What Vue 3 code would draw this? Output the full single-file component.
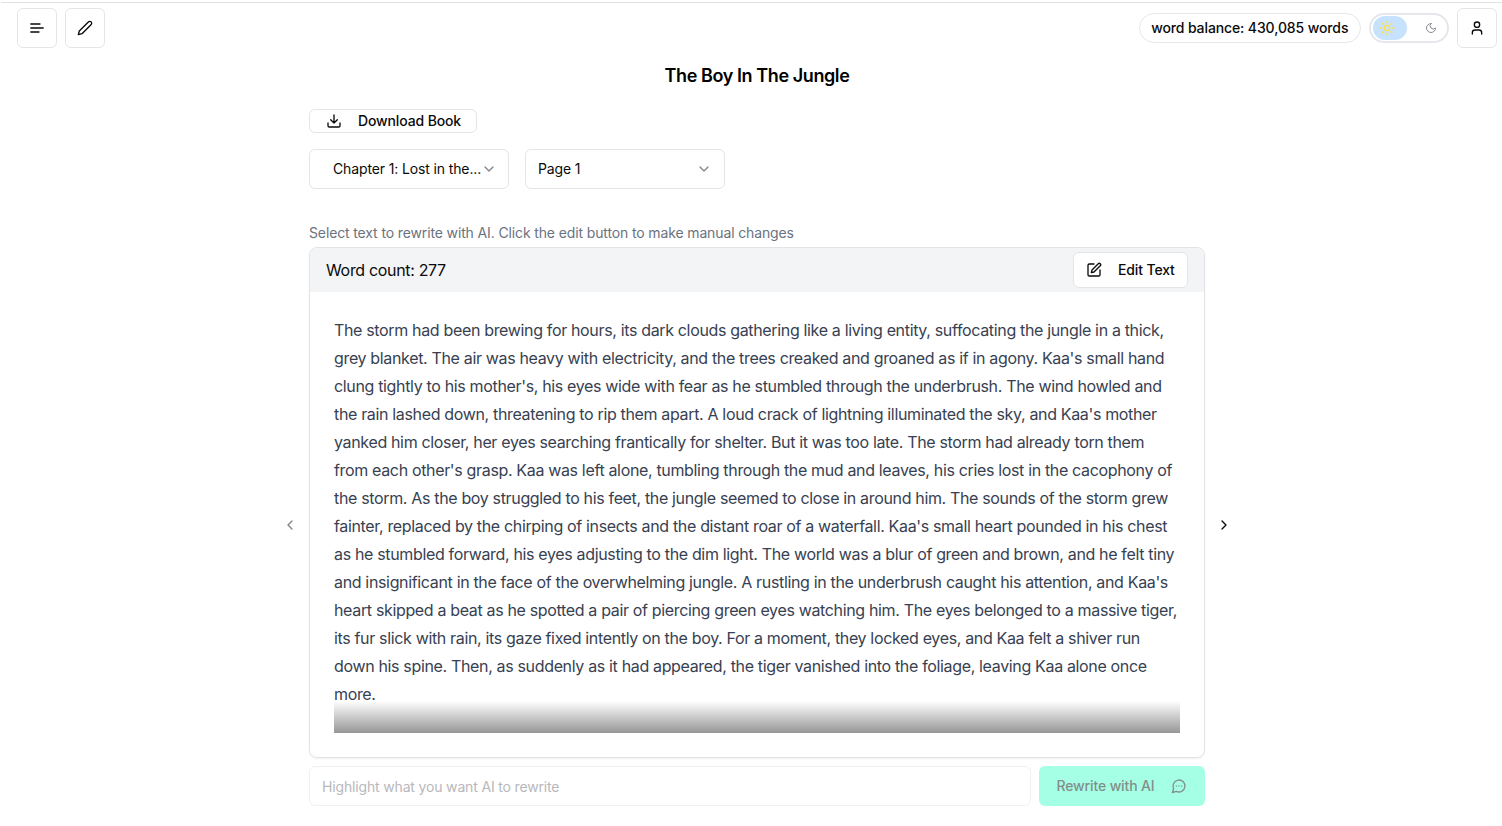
<template>
  <div class="page">
    <header class="topbar">
      <div class="topbar-group">
        <button class="icon-btn" type="button" aria-label="Menu">
          <svg width="16" height="16" viewBox="0 0 16 16" class="icon">
            <path d="M1.8 4H11M1.8 8h12.4M1.8 12H10" />
          </svg>
        </button>
        <button class="icon-btn" type="button" aria-label="New book">
          <svg width="16" height="16" viewBox="0 0 24 24" class="icon icon-24">
            <path d="M17 3a2.85 2.83 0 1 1 4 4L7.5 20.5 2 22l1.5-5.5Z" />
          </svg>
        </button>
      </div>
      <div class="topbar-group">
        <div class="balance">word balance: {{ balance.toLocaleString('en-US') }} words</div>
        <button class="theme-switch" type="button" aria-label="Theme" @click="dark = !dark">
          <span class="theme-side sun" :class="{ active: !dark }">
            <svg width="16" height="16" viewBox="0 0 24 24">
              <circle cx="12" cy="12" r="4" />
              <path
                d="M12 2v2M12 20v2M4.93 4.93l1.41 1.41M17.66 17.66l1.41 1.41M2 12h2M20 12h2M6.34 17.66l-1.41 1.41M19.07 4.93l-1.41 1.41"
              />
            </svg>
          </span>
          <span class="theme-side moon" :class="{ active: dark }">
            <svg width="12" height="12" viewBox="0 0 24 24">
              <path d="M12 3a6 6 0 0 0 9 9 9 9 0 1 1-9-9Z" />
            </svg>
          </span>
        </button>
        <button class="icon-btn user-btn" type="button" aria-label="Account">
          <svg width="16" height="16" viewBox="0 0 24 24" class="icon icon-24">
            <circle cx="12" cy="7" r="4" />
            <path d="M19 21v-2a4 4 0 0 0-4-4H9a4 4 0 0 0-4 4v2" />
          </svg>
        </button>
      </div>
    </header>

    <main class="book">
      <h1 class="book-title">The Boy In The Jungle</h1>

      <button class="download-btn" type="button">
        <svg width="16" height="16" viewBox="0 0 24 24" class="icon icon-24">
          <path d="M21 15v4a2 2 0 0 1-2 2H5a2 2 0 0 1-2-2v-4M7 10l5 5 5-5M12 15V3" />
        </svg>
        <span>Download Book</span>
      </button>

      <div class="selects">
        <button class="select chapter-select" type="button">
          <span>Chapter 1: Lost in the...</span>
          <svg width="16" height="16" viewBox="0 0 24 24" class="chevron"><path d="m6 9 6 6 6-6" /></svg>
        </button>
        <button class="select" type="button">
          <span>Page 1</span>
          <svg width="16" height="16" viewBox="0 0 24 24" class="chevron"><path d="m6 9 6 6 6-6" /></svg>
        </button>
      </div>

      <p class="hint">Select text to rewrite with AI. Click the edit button to make manual changes</p>

      <div class="reader">
        <button class="nav-btn" type="button" aria-label="Previous page" disabled>
          <svg width="16" height="16" viewBox="0 0 24 24" class="icon icon-24"><path d="m15 18-6-6 6-6" /></svg>
        </button>

        <section class="panel">
          <div class="panel-header">
            <span class="word-count">Word count: 277</span>
            <button class="edit-btn" type="button">
              <svg width="16" height="16" viewBox="0 0 24 24" class="icon icon-24">
                <path d="M12 3H5a2 2 0 0 0-2 2v14a2 2 0 0 0 2 2h14a2 2 0 0 0 2-2v-7" />
                <path d="M18.375 2.625a2.12 2.12 0 0 1 3 3L12 15l-4 1 1-4Z" />
              </svg>
              <span>Edit Text</span>
            </button>
          </div>
          <div class="panel-body">
            <div class="scroll-text">
              <p class="story">
                <span v-for="(line, i) in lines" :key="i" class="story-line">{{ line }}</span>
              </p>
              <div class="fade"></div>
            </div>
          </div>
        </section>

        <button class="nav-btn" type="button" aria-label="Next page">
          <svg width="16" height="16" viewBox="0 0 24 24" class="icon icon-24"><path d="m9 18 6-6-6-6" /></svg>
        </button>
      </div>

      <div class="rewrite">
        <input class="rewrite-input" type="text" placeholder="Highlight what you want AI to rewrite" disabled />
        <button class="rewrite-btn" type="button" disabled>
          <span>Rewrite with AI</span>
          <svg width="16" height="16" viewBox="0 0 24 24" class="icon icon-24">
            <path d="M7.9 20A9 9 0 1 0 4 16.1L2 22Z" />
            <path d="M8 12h.01M12 12h.01M16 12h.01" />
          </svg>
        </button>
      </div>
    </main>
  </div>
</template>

<script setup>
import { ref } from 'vue'

const balance = ref(430085)
const dark = ref(false)

const lines = [
  'The storm had been brewing for hours, its dark clouds gathering like a living entity, suffocating the jungle in a thick,',
  "grey blanket. The air was heavy with electricity, and the trees creaked and groaned as if in agony. Kaa's small hand",
  "clung tightly to his mother's, his eyes wide with fear as he stumbled through the underbrush. The wind howled and",
  "the rain lashed down, threatening to rip them apart. A loud crack of lightning illuminated the sky, and Kaa's mother",
  'yanked him closer, her eyes searching frantically for shelter. But it was too late. The storm had already torn them',
  "from each other's grasp. Kaa was left alone, tumbling through the mud and leaves, his cries lost in the cacophony of",
  'the storm. As the boy struggled to his feet, the jungle seemed to close in around him. The sounds of the storm grew',
  "fainter, replaced by the chirping of insects and the distant roar of a waterfall. Kaa's small heart pounded in his chest",
  'as he stumbled forward, his eyes adjusting to the dim light. The world was a blur of green and brown, and he felt tiny',
  "and insignificant in the face of the overwhelming jungle. A rustling in the underbrush caught his attention, and Kaa's",
  'heart skipped a beat as he spotted a pair of piercing green eyes watching him. The eyes belonged to a massive tiger,',
  'its fur slick with rain, its gaze fixed intently on the boy. For a moment, they locked eyes, and Kaa felt a shiver run',
  'down his spine. Then, as suddenly as it had appeared, the tiger vanished into the foliage, leaving Kaa alone once',
  'more.',
]
</script>

<style>
body {
  margin: 0;
  background: #fff;
  overflow: hidden;
}
</style>

<style scoped>
.page {
  height: 826px;
  padding-top: 2px;
  box-sizing: border-box;
  font-family: Inter, 'Liberation Sans', sans-serif;
  font-size: 14px;
  line-height: 20px;
  letter-spacing: -0.13px;
  color: #0a0a0a;
}

button,
input {
  box-sizing: border-box;
  padding: 0;
  font: inherit;
  color: inherit;
  letter-spacing: inherit;
  background: #fff;
  border: 1px solid #e5e5e7;
  border-radius: 6px;
}

.icon,
.chevron {
  flex: none;
  fill: none;
  stroke: currentColor;
  stroke-width: 1.3;
  stroke-linecap: round;
  stroke-linejoin: round;
}

.icon-24 {
  stroke-width: 2;
}

.topbar {
  display: flex;
  justify-content: space-between;
  height: 51px;
  margin-left: 1px;
  padding: 5px 5px 0 16px;
  box-sizing: border-box;
  border-top: 1px solid #e2e2e4;
}

.topbar-group {
  display: flex;
  align-items: center;
  gap: 8px;
  height: 40px;
}

.icon-btn {
  display: flex;
  align-items: center;
  justify-content: center;
  width: 40px;
  height: 40px;
}

.balance {
  width: 222.5px;
  height: 30px;
  box-sizing: border-box;
  border: 1px solid #e5e7eb;
  border-radius: 15px;
  font-weight: 500;
  line-height: 28px;
  text-align: center;
  white-space: nowrap;
  letter-spacing: -0.11px;
}

.theme-switch {
  display: flex;
  align-items: center;
  width: 80px;
  height: 30px;
  padding: 0 2px;
  border: 2px solid #e5e7eb;
  border-radius: 15px;
}

.theme-side {
  display: flex;
  align-items: center;
  width: 34px;
  height: 24px;
  box-sizing: border-box;
  border-radius: 12px;
}

.theme-side svg {
  fill: none;
  stroke: currentColor;
  stroke-width: 2;
  stroke-linecap: round;
  stroke-linejoin: round;
}

.theme-side.active {
  background: #c7e2fe;
}

.sun {
  padding-left: 6px;
  color: #fde047;
}

.moon {
  margin-left: 4px;
  padding-left: 14px;
  color: #8b8b93;
}

.book {
  display: flex;
  flex-direction: column;
  width: 896px;
  margin-left: 309px;
}

.book-title {
  margin: 9px 0 0;
  font-size: 18px;
  font-weight: 600;
  line-height: 28px;
  text-align: center;
  letter-spacing: -0.41px;
  color: #000;
}

.download-btn {
  display: flex;
  align-items: center;
  gap: 16px;
  width: 168px;
  height: 24px;
  margin-top: 19px;
  padding-left: 16px;
  font-weight: 500;
  white-space: nowrap;
}

.selects {
  display: flex;
  gap: 16px;
  margin-top: 16px;
}

.select {
  display: flex;
  align-items: center;
  justify-content: space-between;
  width: 200px;
  height: 40px;
  padding: 0 12px;
  white-space: nowrap;
}

.chapter-select {
  justify-content: flex-start;
  padding-left: 23px;
}

.chevron {
  color: #85858a;
  stroke-width: 2;
}

.hint {
  margin: 34px 0 4px;
  color: #6b7280;
}

.reader {
  display: flex;
  align-items: center;
  gap: 11px;
  width: 950px;
  margin-left: -27px;
}

.nav-btn {
  display: flex;
  flex: none;
  width: 16px;
  border: none;
  margin-top: 44px;
}

.nav-btn:disabled {
  opacity: 0.5;
}

.panel {
  flex: none;
  width: 896px;
  height: 511px;
  box-sizing: border-box;
  border: 1px solid #e2e3e6;
  border-radius: 8px;
  box-shadow: 0 1px 2px rgba(0, 0, 0, 0.06);
  overflow: hidden;
}

.panel-header {
  display: flex;
  align-items: center;
  justify-content: space-between;
  height: 44px;
  padding: 0 16px;
  background: #f3f4f6;
}

.word-count {
  font-size: 16px;
  letter-spacing: -0.33px;
}

.edit-btn {
  display: flex;
  align-items: center;
  gap: 16px;
  width: 115px;
  height: 36px;
  padding-left: 12px;
  font-weight: 500;
  white-space: nowrap;
}

.panel-body {
  padding: 24px;
}

.scroll-text {
  position: relative;
  height: 417px;
}

.story {
  margin: 0;
  font-size: 16px;
  line-height: 28px;
  color: #374151;
  letter-spacing: -0.342px;
}

.story-line {
  display: block;
  white-space: nowrap;
}

.fade {
  position: absolute;
  left: 0;
  right: 0;
  bottom: 0;
  height: 32px;
  background: linear-gradient(to top, #969696, rgba(255, 255, 255, 0));
}

.rewrite {
  display: flex;
  gap: 8px;
  margin-top: 8px;
}

.rewrite-input {
  width: 721.5px;
  height: 40px;
  padding: 0 12px;
  border-color: #f0f0f2;
  letter-spacing: -0.16px;
}

.rewrite-input::placeholder {
  color: #b8b8bc;
  opacity: 1;
}

.rewrite-btn {
  display: flex;
  flex: 1;
  align-items: center;
  justify-content: space-between;
  height: 40px;
  padding: 0 18px;
  border: none;
  background: #a5ffe4;
  color: #828f8b;
  font-weight: 500;
  white-space: nowrap;
}
</style>
